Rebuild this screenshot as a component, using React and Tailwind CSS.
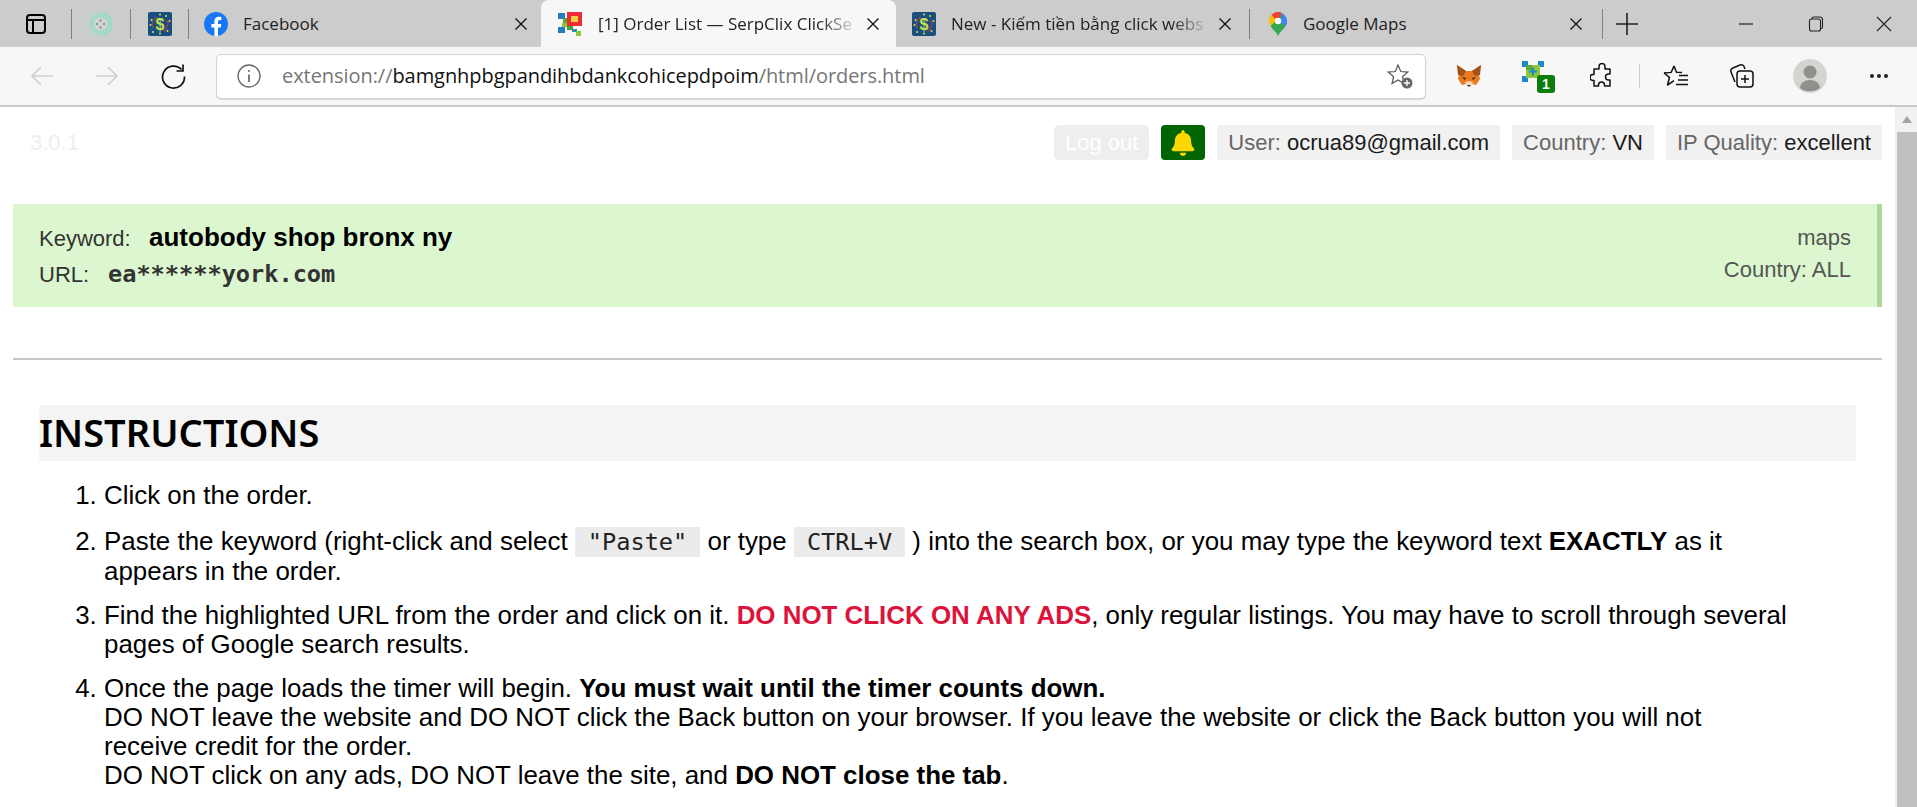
import React from "react";
import { FaBell } from "react-icons/fa";

const Sans = "font-['Liberation_Sans',Arial,sans-serif]";
const Ui = "font-['Open_Sans','Noto_Sans',sans-serif]";

function Sep() {
  return <div className="w-px h-[30px] bg-[#7f7f7f] shrink-0" />;
}
function Close({ c = "#111" }) {
  return (
    <svg width="14" height="14" viewBox="0 0 14 14" className="shrink-0">
      <path d="M1.5 1.5L12.5 12.5M12.5 1.5L1.5 12.5" stroke={c} strokeWidth="1.3" fill="none" />
    </svg>
  );
}
function Dollar() {
  return (
    <svg width="24" height="24" viewBox="0 0 24 24" className="shrink-0">
      <rect width="24" height="24" rx="2" fill="#17507f" />
      <path d="M5 16A8 8 0 0 1 9 5M19 8A8 8 0 0 1 15 19" stroke="#b23a55" strokeWidth="1.2" fill="none" />
      <g fill="#f1d83c">
        <circle cx="12" cy="2.500" r="1" /><circle cx="18" cy="4" r="1" /><circle cx="21.500" cy="9" r="1" />
        <circle cx="3.500" cy="8" r="1" /><circle cx="2.500" cy="13" r="1" /><circle cx="5" cy="20" r="1" /><circle cx="12" cy="21.500" r="1" /><circle cx="19.500" cy="19" r="1" />
      </g>
      <text x="12" y="17.500" textAnchor="middle" fontSize="16" fontWeight="700" fill="#c8e04a" fontFamily="Liberation Sans">$</text>
    </svg>
  );
}
function Fb() {
  return (
    <svg width="24" height="24" viewBox="0 0 24 24" className="shrink-0">
      <circle cx="12" cy="12" r="12" fill="#1877f2" />
      <path d="M16.7 15.4l.5-3.4H14V9.7c0-.9.5-1.8 1.9-1.8h1.5V5c0 0-1.3-.2-2.6-.2-2.7 0-4.4 1.6-4.4 4.5V12H7.4v3.4h3V24h3.6v-8.6z" fill="#fff" />
    </svg>
  );
}
function Serp() {
  return (
    <svg width="24" height="24" viewBox="0 0 24 24" className="shrink-0">
      <rect x="0" y="1" width="7" height="6" fill="#1f7fc0" />
      <rect x="0" y="15" width="7" height="6" fill="#1f7fc0" />
      <rect x="5" y="6" width="6" height="6" fill="#5aa832" />
      <rect x="4" y="11" width="5" height="4" fill="#8cc63f" />
      <rect x="9" y="13" width="6" height="5" fill="#4c9e3a" />
      <rect x="14" y="17" width="5" height="3" fill="#2e8fb0" />
      <rect x="18" y="19" width="5" height="5" fill="#8cc63f" />
      <rect x="9" y="0" width="15" height="14" fill="#ef2c35" />
      <rect x="13" y="4" width="7" height="6" fill="#f4cf45" />
    </svg>
  );
}
function SerpExt() {
  return (
    <svg width="22" height="21" viewBox="0 0 22 21" className="shrink-0">
      <rect x="0" y="0" width="6" height="6" fill="#1f86cc" />
      <rect x="16" y="0" width="6" height="6" fill="#1f86cc" />
      <rect x="0" y="15" width="6" height="6" fill="#1f86cc" />
      <rect x="4" y="4" width="14" height="13" fill="#8cc63f" />
      <rect x="4" y="4" width="6" height="5" fill="#5aa832" />
      <path d="M11 6.500V14.500M7 10.500H15" stroke="#1f86cc" strokeWidth="2" />
    </svg>
  );
}
function Maps() {
  return (
    <svg width="18" height="24" viewBox="0 0 18 24" className="shrink-0">
      <path d="M9 0a9 9 0 0 1 9 9c0 2-.6 3.600-1.500 5L9 9l3-7z" fill="#4285f4" />
      <path d="M2.500 2.800A9 9 0 0 1 12 .5L12.500 5 6 11.500z" fill="#ea4335" />
      <path d="M2.500 2.800L7 8 1.500 14C.6 12.600 0 11 0 9c0-2.400.9-4.600 2.500-6.200z" fill="#fbbc04" />
      <path d="M1.500 14L12.500 3.500 18 9c0 2-.6 3.600-1.500 5C14 18 10.500 20 9 24 7.500 20 4 18 1.500 14z" fill="#34a853" />
      <path d="M12.500 4.500L16 6.500 17.800 9c0 2-.5 3.600-1.400 5L10 9z" fill="#4285f4" />
      <circle cx="9" cy="9" r="3.200" fill="#fff" />
    </svg>
  );
}
function Reel() {
  return (
    <svg width="24" height="24" viewBox="0 0 24 24" className="shrink-0">
      <circle cx="12" cy="12" r="12" fill="#a5d8c8" />
      <circle cx="11.500" cy="12" r="6.500" fill="#d6d6d6" />
      <g fill="#8c9a98">
        <circle cx="11.500" cy="8.500" r="1.300" /><circle cx="11.500" cy="15.500" r="1.300" /><circle cx="8" cy="12" r="1.300" /><circle cx="15" cy="12" r="1.300" />
      </g>
    </svg>
  );
}
function Tab({ icon, title, active, fade, width, pl, pr, gap }) {
  return (
    <div
      className={`flex items-center h-[47px] shrink-0 ${active ? "bg-[#f7f7f7] rounded-t-[8px]" : ""}`}
      style={{ width, paddingLeft: pl, paddingRight: pr }}
    >
      {icon}
      <span
        className={`flex-1 min-w-0 overflow-hidden whitespace-nowrap text-[17px] text-[#222] ${Ui}`}
        style={{
          marginLeft: gap,
          ...(fade ? { WebkitMaskImage: "linear-gradient(to right, #000 85%, transparent 100%)" } : {}),
        }}
      >
        {title}
      </span>
      <span className="ml-[8px] shrink-0"><Close /></span>
    </div>
  );
}
function NavArrow({ dir }) {
  return (
    <svg width="26" height="26" viewBox="0 0 26 26" className={dir === "r" ? "rotate-180" : ""}>
      <path d="M3 13H24M12 4L3 13L12 22" stroke="#cfcfcf" strokeWidth="1.600" fill="none" />
    </svg>
  );
}
function Chip({ label, value }) {
  return (
    <div className={`h-[35px] flex items-center px-[11px] bg-[#f1f1f1] text-[22px] text-[#666] whitespace-nowrap ${Sans}`}>
      {label}&nbsp;<span className="text-[#1a1a1a]">{value}</span>
    </div>
  );
}
function Code({ children }) {
  return (
    <code className="inline-block h-[30px] leading-[30px] bg-[#ebebeb] text-[#222] px-[13px] text-[23.6px] font-['DejaVu_Sans_Mono',monospace] font-normal">
      {children}
    </code>
  );
}

export default function App() {
  return (
    <div className={`w-[1917px] h-[807px] overflow-hidden bg-white flex flex-col ${Sans}`}>
      {/* Tab strip */}
      <div className="h-[47px] bg-[#cccccc] flex items-center shrink-0">
        <div className="w-[71px] flex justify-center shrink-0">
          <svg width="20" height="20" viewBox="0 0 20 20">
            <rect x="1" y="1" width="18" height="18" rx="3" stroke="#000" strokeWidth="2" fill="none" />
            <path d="M1 6H19M7 6V19" stroke="#000" strokeWidth="2" fill="none" />
          </svg>
        </div>
        <Sep />
        <div className="w-[58px] flex justify-center shrink-0"><Reel /></div>
        <Sep />
        <div className="w-[57px] flex justify-center shrink-0"><Dollar /></div>
        <Sep />
        <Tab icon={<Fb />} title="Facebook" width={352} pl={15} pr={13} gap={15} />
        <Tab icon={<Serp />} title="[1] Order List — SerpClix ClickSe" active fade width={355} pl={17} pr={16} gap={16} />
        <Tab icon={<Dollar />} title="New - Kiếm tiền bằng click webs" fade width={353} pl={16} pr={17} gap={15} />
        <Sep />
        <Tab icon={<Maps />} title="Google Maps" width={352} pl={19} pr={19} gap={16} />
        <Sep />
        <div className="ml-[13px] shrink-0">
          <svg width="22" height="22" viewBox="0 0 22 22"><path d="M11 0V22M0 11H22" stroke="#222" strokeWidth="1.600" /></svg>
        </div>
        <div className="ml-auto flex items-center shrink-0">
          <div className="w-[70px] flex justify-center">
            <svg width="16" height="16" viewBox="0 0 16 16"><path d="M1 8H15" stroke="#222" strokeWidth="1.200" /></svg>
          </div>
          <div className="w-[70px] flex justify-center">
            <svg width="16" height="16" viewBox="0 0 16 16" fill="none" stroke="#222" strokeWidth="1.100"><rect x="1.500" y="3" width="11" height="12" rx="2" /><path d="M4 3V2.500A1.500 1.500 0 0 1 5.500 1H12A2.500 2.500 0 0 1 14.500 3.500V11A1.500 1.500 0 0 1 13 12.500" /></svg>
          </div>
          <div className="w-[66px] flex justify-center">
            <svg width="16" height="16" viewBox="0 0 16 16"><path d="M1 1L15 15M15 1L1 15" stroke="#222" strokeWidth="1.100" /></svg>
          </div>
        </div>
      </div>

      {/* Toolbar */}
      <div className="h-[60px] bg-[#f7f7f7] border-b-[2px] border-[#c9c9c9] flex items-center shrink-0">
        <div className="flex items-center shrink-0 pl-[29px] gap-[39px]">
          <NavArrow dir="l" />
          <NavArrow dir="r" />
          <svg width="27" height="27" viewBox="0 0 27 27" className="shrink-0 ml-[1px]" fill="none" stroke="#111" strokeWidth="1.700">
            <path d="M21.500 6.500A11 11 0 1 0 24.500 13.500" />
            <path d="M23 1.500V8H16.500" />
          </svg>
        </div>
        <div className="ml-[29px] w-[1210px] h-[45px] bg-white border border-[#d4d4d4] rounded-[5px] flex items-center shrink-0 shadow-[0_1px_1px_rgba(0,0,0,0.12)]">
          <div className="ml-[20px] shrink-0">
            <svg width="24" height="24" viewBox="0 0 24 24" fill="none" stroke="#666" strokeWidth="1.300">
              <circle cx="12" cy="12" r="11" />
              <path d="M12 10.500V18" strokeWidth="1.700" />
              <circle cx="12" cy="7" r="1" fill="#666" stroke="none" />
            </svg>
          </div>
          <div className={`ml-[21px] text-[20px] text-[#767676] whitespace-nowrap ${Ui} tracking-[-0.06px]`}>
            extension://<span className="text-[#111]">bamgnhpbgpandihbdankcohicepdpoim</span>/html/orders.html
          </div>
          <div className="ml-auto mr-[12px] shrink-0">
            <svg width="26" height="26" viewBox="0 0 26 26">
              <path d="M11 2l2.800 6.500 7 .6-5.300 4.600 1.600 6.800L11 17l-6 3.500 1.600-6.800L1.300 9.100l7-.6z" fill="none" stroke="#555" strokeWidth="1.200" />
              <circle cx="20" cy="20" r="5.500" fill="#666" />
              <path d="M20 17v6M17 20h6" stroke="#fff" strokeWidth="1.300" />
            </svg>
          </div>
        </div>
        <div className="ml-[30px] shrink-0">
          <svg width="26" height="24" viewBox="0 0 26 24">
            <path d="M1 1l9 6h6l9-6-2 10 1 4-4 6-4-1h-6l-4 1-4-6 1-4z" fill="#ea7a1f" />
            <path d="M1 1l9 6-3 5-5-1zM25 1l-9 6 3 5 5-1z" fill="#a0521b" />
            <path d="M10 20l3 3 3-3-3-2z" fill="#3a2a1a" />
            <path d="M6 13l4 1-1 2zM20 13l-4 1 1 2z" fill="#33271c" />
            <path d="M9 18l4-1 4 1-1 3h-6z" fill="#efd6be" />
          </svg>
        </div>
        <div className="ml-[40px] shrink-0 relative w-[26px] h-[26px] -mt-[4px]">
          <SerpExt />
          <div className={`absolute left-[15px] top-[14px] w-[18px] h-[18px] bg-[#0a7d0a] rounded-[3px] text-white text-[14px] font-bold leading-[18px] text-center ${Sans}`}>1</div>
        </div>
        <div className="ml-[42px] shrink-0">
          <svg width="24" height="26" viewBox="0 0 24 26" fill="none" stroke="#111" strokeWidth="1.500">
            <path d="M9 3.500a3 3 0 0 1 6 0V6h5v5h-1.500a3 3 0 0 0 0 6H20v6h-5.500v-1a3 3 0 0 0-6 0v1H4v-5.500H3a3 3 0 0 1 0-6h1V6h5z" strokeLinejoin="round" />
          </svg>
        </div>
        <div className="ml-[25px] w-px h-[24px] bg-[#cfcfcf] shrink-0" />
        <div className="ml-[23px] shrink-0">
          <svg width="26" height="24" viewBox="0 0 26 24" fill="none" stroke="#111" strokeWidth="1.500">
            <path d="M11 2l2.500 6.200L19 8.500M1 9l5.500 4.300L4.500 21l6.500-4.300" strokeLinejoin="round" />
            <path d="M1 9l7.200-.6L11 2M16 11.500h9M15 16h10M13 20.500h12" />
          </svg>
        </div>
        <div className="ml-[40px] shrink-0">
          <svg width="26" height="26" viewBox="0 0 26 26" fill="none" stroke="#111" strokeWidth="1.500">
            <path d="M6 19L2 9A3 3 0 0 1 4 5L11 2A3 3 0 0 1 15 3.500L16 6" />
            <rect x="8" y="8" width="16" height="16" rx="3" />
            <path d="M16 12V20M12 16H20" />
          </svg>
        </div>
        <div className="ml-[38px] shrink-0">
          <svg width="34" height="34" viewBox="0 0 34 34">
            <circle cx="17" cy="17" r="17" fill="#d4d4d0" />
            <circle cx="17" cy="13" r="6.500" fill="#8f8f8b" />
            <path d="M7 29a10 8 0 0 1 20 0 17 17 0 0 1-20 0z" fill="#8f8f8b" />
          </svg>
        </div>
        <div className="ml-[43px] flex gap-[3px] shrink-0">
          <div className="w-[4px] h-[4px] rounded-full bg-[#222]" />
          <div className="w-[4px] h-[4px] rounded-full bg-[#222]" />
          <div className="w-[4px] h-[4px] rounded-full bg-[#222]" />
        </div>
      </div>

      {/* Page */}
      <div className="flex-1 min-h-0 flex">
        <div className="flex-1 min-w-0 overflow-hidden">
          <div className="pl-[13px] pr-[13px]">
            {/* Header row */}
            <div className="h-[71px] flex items-center">
              <div className="ml-[17px] text-[22px] text-[#eeeeee]">3.0.1</div>
              <div className="ml-auto flex items-center gap-[12px]">
                <div className="h-[35px] px-[11px] flex items-center rounded-[5px] bg-[#eeeeee] text-white text-[22px]">Log out</div>
                <div className="w-[44px] h-[35px] flex items-center justify-center rounded-[4px] bg-[#006400]">
                  <FaBell size={26} color="#ffd700" />
                </div>
                <Chip label="User:" value="ocrua89@gmail.com" />
                <Chip label="Country:" value="VN" />
                <Chip label="IP Quality:" value="excellent" />
              </div>
            </div>

            {/* Order card */}
            <div className="mt-[26px] h-[103px] bg-[#dcf7cf] border-r-[5px] border-[#aed79b] flex items-center justify-between pl-[26px] pr-[26px]">
              <div className="text-[#333] text-[22px]">
                <div className="flex items-baseline h-[39px]">
                  <span className="w-[110px]">Keyword:</span>
                  <span className="text-[26px] font-bold text-black">autobody shop bronx ny</span>
                </div>
                <div className="flex items-baseline h-[36px]">
                  <span className="w-[69px]">URL:</span>
                  <span className="font-['DejaVu_Sans_Mono',monospace] font-bold text-[23.6px] text-[#333]">ea******york.com</span>
                </div>
              </div>
              <div className="text-right text-[22px] text-[#555] -mt-[4px]">
                <div className="h-[32px] leading-[32px]">maps</div>
                <div className="h-[32px] leading-[32px]">Country: ALL</div>
              </div>
            </div>

            <div className="mt-[51px] h-[2px] bg-[#c8c8c8]" />

            {/* Instructions */}
            <div className="px-[26px]">
              <h1 className="mt-[45px] h-[56px] leading-[54px] bg-[#f4f4f4] text-[38px] font-semibold text-black font-['Noto_Sans',sans-serif]">INSTRUCTIONS</h1>
              <ol className="list-decimal pl-[65px] pr-[66px] mt-[20px] text-[25.92px] leading-[29px] text-black">
                <li className="mb-[17px]">Click on the order.</li>
                <li className="mb-[15px]">
                  Paste the keyword (right-click and select <Code>"Paste"</Code> or type <Code>CTRL+V</Code> ) into the search box, or you may type the keyword text <b>EXACTLY</b> as it appears in the order.
                </li>
                <li className="mb-[15px]">
                  Find the highlighted URL from the order and click on it. <b className="text-[#dc143c]">DO NOT CLICK ON ANY ADS</b>, only regular listings. You may have to scroll through several pages of Google search results.
                </li>
                <li>
                  Once the page loads the timer will begin. <b>You must wait until the timer counts down.</b>
                  <br />
                  DO NOT leave the website and DO NOT click the Back button on your browser. If you leave the website or click the Back button you will not receive credit for the order.
                  <br />
                  DO NOT click on any ads, DO NOT leave the site, and <b>DO NOT close the tab</b>.
                </li>
              </ol>
            </div>
          </div>
        </div>

        {/* Scrollbar */}
        <div className="w-[22px] shrink-0 bg-[#f1f1f1] flex flex-col items-stretch pl-[2px]">
          <div className="h-[25px] flex items-center justify-center">
            <svg width="10" height="7" viewBox="0 0 10 7"><path d="M5 0L10 7H0z" fill="#a3a3a3" /></svg>
          </div>
          <div className="flex-1 bg-[#c0c0c0]" />
        </div>
      </div>
    </div>
  );
}
